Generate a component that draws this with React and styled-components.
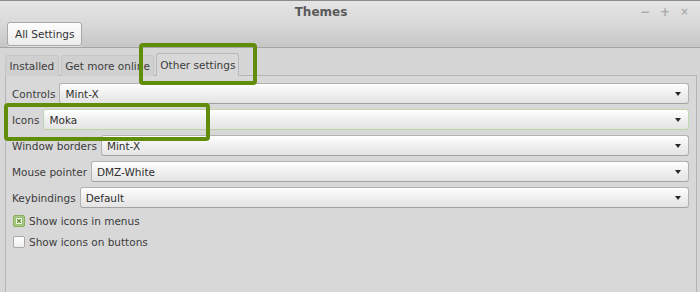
import React from "react";
import styled, { createGlobalStyle } from "styled-components";

const GlobalStyle = createGlobalStyle`
  html, body {
    margin: 0;
    padding: 0;
    background: #d6d6d6;
  }
  body {
    font-family: "DejaVu Sans", "Liberation Sans", sans-serif;
    font-size: 10.5px;
    color: #3c3c3c;
  }
`;

const settings = [
  { label: "Controls", value: "Mint-X" },
  { label: "Icons", value: "Moka", focused: true },
  { label: "Window borders", value: "Mint-X" },
  { label: "Mouse pointer", value: "DMZ-White" },
  { label: "Keybindings", value: "Default" },
];

const App = () => {
  return (
    <Window>
      <GlobalStyle />
      <Header>
        <TitleRow>
          <Title>Themes</Title>
          <WindowControls>
            <ControlGlyph>−</ControlGlyph>
            <ControlGlyph>+</ControlGlyph>
            <ControlGlyph small>×</ControlGlyph>
          </WindowControls>
        </TitleRow>
        <HeaderButton>All Settings</HeaderButton>
      </Header>
      <Body>
        <TabBar>
          <Tab>Installed</Tab>
          <Tab>Get more online</Tab>
          <Tab active>Other settings</Tab>
        </TabBar>
        <Panel>
          {settings.map((s) => (
            <Row key={s.label}>
              <Label>{s.label}</Label>
              <Combo focused={s.focused}>
                <span>{s.value}</span>
                <Arrow />
              </Combo>
            </Row>
          ))}
          <Checks>
            <CheckRow>
              <CheckBox checked>
                <svg width="8" height="8" viewBox="0 0 8 8">
                  <rect x="0.5" y="0.5" width="7" height="7" fill="#eef5e4" stroke="#9dbf78" />
                  <path d="M2.2 2.2 L5.8 5.8 M5.8 2.2 L2.2 5.8" stroke="#5e8f2e" strokeWidth="1.3" />
                </svg>
              </CheckBox>
              Show icons in menus
            </CheckRow>
            <CheckRow>
              <CheckBox />
              Show icons on buttons
            </CheckRow>
          </Checks>
        </Panel>
      </Body>
      <Highlight style={{ left: 139, top: 43, width: 118, height: 42 }} />
      <Highlight style={{ left: 4, top: 103, width: 206, height: 38 }} />
    </Window>
  );
};

export default App;

const Window = styled.div`
  position: relative;
  width: 700px;
  height: 292px;
  overflow: hidden;
  background: #d6d6d6;
  display: flex;
  flex-direction: column;
`;

const Header = styled.div`
  height: 48px;
  border-top: 1px solid #8c8c8c;
  border-bottom: 1px solid #a4a4a4;
  background: linear-gradient(#e4e4e4, #d9d9d9 50%, #c6c6c6);
  padding: 0 7px;
  box-sizing: border-box;
  display: flex;
  flex-direction: column;
`;

const TitleRow = styled.div`
  position: relative;
  height: 21px;
  display: flex;
  align-items: center;
  justify-content: center;
`;

const Title = styled.div`
  font-weight: bold;
  font-size: 12px;
  color: #5a5a5a;
  margin-left: -58px;
`;

const WindowControls = styled.div`
  position: absolute;
  right: 4px;
  top: 2px;
  display: flex;
  gap: 11px;
`;

const ControlGlyph = styled.span`
  width: 9px;
  text-align: center;
  font-size: ${(p) => (p.small ? "10px" : "12px")};
  font-weight: bold;
  color: #ababab;
  line-height: 18px;
`;

const HeaderButton = styled.button`
  align-self: flex-start;
  height: 24px;
  padding: 0 7px;
  font-family: inherit;
  font-size: 10.5px;
  color: #333;
  border: 1px solid #a8a8a8;
  border-radius: 3px;
  background: linear-gradient(#fdfdfd, #ececec);
  box-shadow: 0 1px 0 rgba(255, 255, 255, 0.5);
`;

const Body = styled.div`
  flex: 1;
  padding: 6px 3px 0 5px;
  display: flex;
  flex-direction: column;
`;

const TabBar = styled.div`
  display: flex;
  align-items: flex-end;
  gap: 2px;
  height: 22px;
  position: relative;
  z-index: 1;
  margin-bottom: -1px;
`;

const Tab = styled.div`
  height: ${(p) => (p.active ? "23px" : "21px")};
  padding: 0 ${(p) => (p.active ? "3px" : "3.5px")};
  box-sizing: border-box;
  display: flex;
  align-items: center;
  color: #3c3c3c;
  border: 1px solid ${(p) => (p.active ? "#b8b8b8" : "#c6c6c6")};
  border-bottom: ${(p) => (p.active ? "1px solid #d8d8d8" : "none")};
  border-radius: 3px 3px 0 0;
  background: ${(p) => (p.active ? "#d8d8d8" : "#d0d0d0")};
`;

const Panel = styled.div`
  flex: 1;
  border: 1px solid #b4b4b4;
  border-bottom: none;
  background: #d8d8d8;
  padding: 7px 7px 0 6px;
  display: flex;
  flex-direction: column;
  gap: 5px;
`;

const Row = styled.div`
  display: flex;
  align-items: center;
  gap: 4px;
  height: 21px;
`;

const Label = styled.span`
  white-space: nowrap;
  color: #3c3c3c;
`;

const Combo = styled.div`
  flex: 1;
  height: 21px;
  box-sizing: border-box;
  border: 1px solid ${(p) => (p.focused ? "#c2d6ad" : "#b2b2b2")};
  border-bottom-color: ${(p) => (p.focused ? "#bcd2a4" : "#a2a2a2")};
  border-radius: 3px;
  background: linear-gradient(#ffffff, #f1f1f1 45%, #e4e4e4);
  display: flex;
  align-items: center;
  justify-content: space-between;
  padding: 0 7px 0 5px;
  color: #2e2e2e;
`;

const Arrow = styled.span`
  width: 0;
  height: 0;
  border-left: 3.5px solid transparent;
  border-right: 3.5px solid transparent;
  border-top: 4px solid #2a2a2a;
  margin-top: 1px;
`;

const Checks = styled.div`
  display: flex;
  flex-direction: column;
  gap: 8px;
  margin-top: 1px;
  padding-left: 1px;
`;

const CheckRow = styled.label`
  display: flex;
  align-items: center;
  gap: 4px;
  height: 13px;
  color: #3c3c3c;
`;

const CheckBox = styled.span`
  width: 12px;
  height: 12px;
  box-sizing: border-box;
  border: 1px solid ${(p) => (p.checked ? "#86ad5e" : "#a8a8a8")};
  border-radius: 2px;
  background: ${(p) => (p.checked ? "#a9cb86" : "linear-gradient(#ffffff, #f0f0f0)")};
  display: flex;
  align-items: center;
  justify-content: center;
`;

const Highlight = styled.div`
  position: absolute;
  box-sizing: border-box;
  border: 4px solid #628d0b;
  border-radius: 4px;
  pointer-events: none;
  z-index: 5;
`;
